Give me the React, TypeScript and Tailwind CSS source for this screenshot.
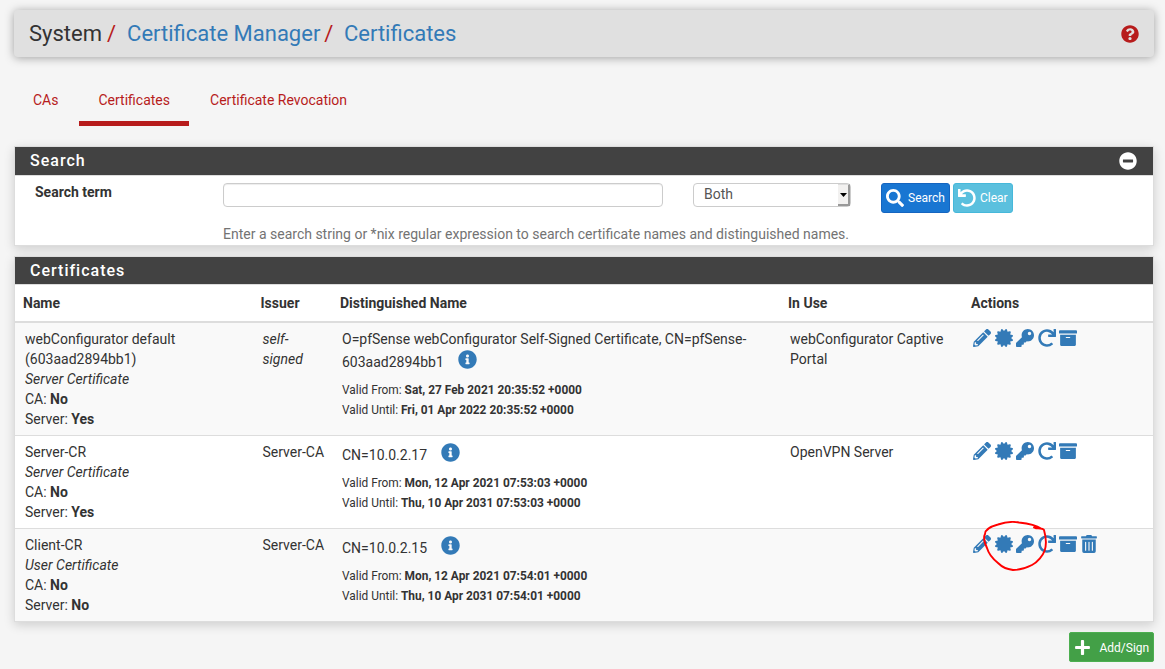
import type { ReactNode } from 'react';
import {
  FaArchive,
  FaCertificate,
  FaInfoCircle,
  FaKey,
  FaMinusCircle,
  FaPencilAlt,
  FaPlus,
  FaQuestionCircle,
  FaRedo,
  FaSearch,
  FaTrashAlt,
  FaUndo,
} from 'react-icons/fa';

type Certificate = {
  name: string[];
  type: string;
  ca: string;
  server: string;
  issuer: ReactNode;
  subject: string[];
  from: string;
  until: string;
  inUse: string[];
  deletable?: boolean;
};

const certificates: Certificate[] = [
  {
    name: ['webConfigurator default', '(603aad2894bb1)'],
    type: 'Server Certificate',
    ca: 'No',
    server: 'Yes',
    issuer: (
      <i>
        self-
        <br />
        signed
      </i>
    ),
    subject: ['O=pfSense webConfigurator Self-Signed Certificate, CN=pfSense-', '603aad2894bb1'],
    from: 'Sat, 27 Feb 2021 20:35:52 +0000',
    until: 'Fri, 01 Apr 2022 20:35:52 +0000',
    inUse: ['webConfigurator Captive', 'Portal'],
  },
  {
    name: ['Server-CR'],
    type: 'Server Certificate',
    ca: 'No',
    server: 'Yes',
    issuer: 'Server-CA',
    subject: ['CN=10.0.2.17'],
    from: 'Mon, 12 Apr 2021 07:53:03 +0000',
    until: 'Thu, 10 Apr 2031 07:53:03 +0000',
    inUse: ['OpenVPN Server'],
  },
  {
    name: ['Client-CR'],
    type: 'User Certificate',
    ca: 'No',
    server: 'No',
    issuer: 'Server-CA',
    subject: ['CN=10.0.2.15'],
    from: 'Mon, 12 Apr 2021 07:54:01 +0000',
    until: 'Thu, 10 Apr 2031 07:54:01 +0000',
    inUse: [],
    deletable: true,
  },
];

function Panel({ title, action, children }: { title: string; action?: ReactNode; children: ReactNode }) {
  return (
    <section className="border border-[#ddd] bg-white shadow-[0_3px_10px_rgba(0,0,0,0.16)]">
      <header className="flex items-center justify-between bg-[#424242] pl-[15px] pr-4 text-white">
        <h2 className="text-base leading-[27px] font-medium tracking-[1px]">{title}</h2>
        {action}
      </header>
      {children}
    </section>
  );
}

function CertificateRow({ cert }: { cert: Certificate }) {
  const lead = cert.subject.slice(0, -1);
  const last = cert.subject[cert.subject.length - 1];
  return (
    <tr className="border-t border-[#ddd] align-top odd:bg-[#f9f9f9] first:border-t-2">
      <td className="py-1.5 pl-2.5">
        {cert.name.map((line) => (
          <div key={line}>{line}</div>
        ))}
        <i className="block">{cert.type}</i>
        <div>
          CA: <b>{cert.ca}</b>
        </div>
        <div>
          Server: <b>{cert.server}</b>
        </div>
      </td>
      <td className="py-1.5 pl-[10.5px]">{cert.issuer}</td>
      <td className="py-1.5 pl-2.5">
        {lead.map((line) => (
          <div key={line} className="whitespace-nowrap">{line}</div>
        ))}
        <div className="flex h-[25px] items-center gap-[14px]">
          <span className="pt-[2px]">{last}</span>
          <FaInfoCircle className="mb-1 size-[19px] text-[#337ab7]" />
        </div>
        <div className="mt-[6px] text-[11.9px] leading-5">
          <div>
            Valid From: <b>{cert.from}</b>
          </div>
          <div>
            Valid Until: <b>{cert.until}</b>
          </div>
        </div>
      </td>
      <td className="py-1.5 pl-2.5">
        {cert.inUse.map((line) => (
          <div key={line}>{line}</div>
        ))}
      </td>
      <td className="py-1.5 pl-2.5">
        <div className="relative flex h-[19px] items-center gap-[3.5px] pl-[0.2px] text-[18px] text-[#337ab7]">
          <FaPencilAlt />
          <FaCertificate />
          <FaKey />
          <FaRedo />
          <FaArchive />
          {cert.deletable && <FaTrashAlt className="-ml-[1px]" />}
          {cert.deletable && (
            <svg
              className="absolute -top-[14px] left-[10px] h-[52px] w-[64px]"
              viewBox="0 0 64 52"
              fill="none"
              stroke="#ff0000"
              strokeWidth="1.9"
              strokeLinecap="round"
              strokeLinejoin="round"
            >
              <path d="M51 6.5 L58 7.5 C53 4 45 2.5 36 1.5 C28 0 21 1.5 15 3.5 C6 6 2 9 2 13 C-0.5 18 2 23 4 27 C6 34 10 38 15 42 C20 47 24 48 30 49 C36 49 43 47 49 44 C55 41 60 34 61.5 30 C64 23 63 16 61 9 C60 7 56 7.5 52 7" />
            </svg>
          )}
        </div>
      </td>
    </tr>
  );
}

export default function App() {
  return (
    <div
      className="h-[669px] overflow-hidden bg-[#f5f5f5] px-3.5 pt-2.5 text-sm leading-5 text-[#333]"
      style={{ fontFamily: 'Roboto, sans-serif' }}
    >
      <header className="mr-[-3px] flex h-[47px] items-center justify-between rounded bg-[#e0e0e0] pl-[15px] pr-[15px] shadow-[0_1px_10px_rgba(0,0,0,0.35)]">
        <h1 className="flex text-[22px] leading-6 text-[#333]">
          System<span className="ml-[5px] mr-[11px] text-[#b71c1c]">/</span>
          <a className="text-[#337ab7]">Certificate Manager</a>
          <span className="ml-[4px] mr-[10.5px] text-[#b71c1c]">/</span>
          <a className="text-[#337ab7]">Certificates</a>
        </h1>
        <FaQuestionCircle className="size-[18px] text-[#b71c1c]" />
      </header>

      <nav className="mt-[33px] flex gap-[2px] text-[#b71c1c]">
        <a className="h-9 px-[19px]">CAs</a>
        <a className="h-9 border-b-[5px] border-[#b71c1c] px-[19px]">Certificates</a>
        <a className="h-9 px-[19px]">Certificate Revocation</a>
      </nav>

      <main className="mt-5 mr-[-3px]">
        <Panel title="Search" action={<FaMinusCircle className="size-[18px]" />}>
          <div className="h-px bg-[#424242]" />
          <div className="flex h-[70px] border-t border-[#ddd] pt-[7px] pl-5">
            <label className="-mt-px w-[188px] font-bold">Search term</label>
            <div>
              <div className="flex items-start">
                <input className="h-6 w-[440px] rounded-[4px] border border-[#ccc] bg-white shadow-[inset_0_1px_1px_rgba(0,0,0,0.075)]" />
                <div className="ml-[30px] flex h-6 w-[158px] items-stretch justify-between rounded-[4px] border border-[#ccc] pl-2.5 text-[#555]">
                  <span>Both</span>
                  <span className="flex w-3 items-center justify-center border-t border-r-2 border-b-2 border-t-[#ddd] border-r-[#999] border-b-[#999] bg-[#f2f1f0]">
                    <svg className="h-[4px] w-[7px]" viewBox="0 0 7 4">
                      <path d="M0 0h7L3.5 4z" fill="#000" />
                    </svg>
                  </span>
                </div>
                <button className="ml-[30px] flex h-[30px] w-[69px] items-center gap-1 rounded-[3px] border border-[#1565c0] bg-[#1976d2] pl-1 text-xs text-white">
                  <FaSearch className="size-[18px]" />
                  Search
                </button>
                <button className="ml-[3px] flex h-[30px] w-[60px] items-center gap-1 rounded-[3px] border border-[#46b8da] bg-[#5bc0de] pl-1 text-xs text-white">
                  <FaUndo className="size-[18px]" />
                  Clear
                </button>
              </div>
              <p className="mt-[11px] text-[#737373]">
                Enter a search string or *nix regular expression to search certificate names and distinguished names.
              </p>
            </div>
          </div>
        </Panel>

        <div className="mt-2.5">
          <Panel title="Certificates">
            <table className="w-full table-fixed border-collapse border-t border-[#ddd]">
              <colgroup>
                <col className="w-[237px]" />
                <col className="w-[80px]" />
                <col className="w-[448px]" />
                <col className="w-[183px]" />
                <col />
              </colgroup>
              <thead>
                <tr className="h-[37px] text-left">
                  <th className="pl-2">Name</th>
                  <th className="pl-[8.5px]">Issuer</th>
                  <th className="pl-2">Distinguished Name</th>
                  <th className="pl-2">In Use</th>
                  <th className="pl-2">Actions</th>
                </tr>
              </thead>
              <tbody>
                {certificates.map((cert) => (
                  <CertificateRow key={cert.name[0]} cert={cert} />
                ))}
              </tbody>
            </table>
          </Panel>
        </div>

        <div className="mt-2.5 flex justify-end">
          <button className="flex h-[30px] w-[85px] items-center gap-2 rounded-[2px] border border-[#4caf50] bg-[#43a047] pl-1 text-xs whitespace-nowrap text-white">
            <FaPlus className="mt-[2px] size-[17px] shrink-0" />
            <span className="pt-[3px] pl-[0.5px]">Add/Sign</span>
          </button>
        </div>
      </main>
    </div>
  );
}
